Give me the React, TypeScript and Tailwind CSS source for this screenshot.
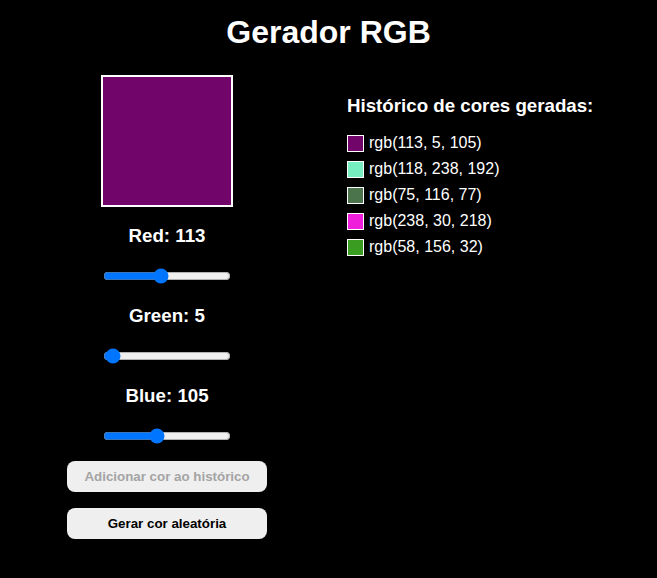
import { useState } from 'react'

type Rgb = [number, number, number]

const INITIAL_HISTORY: Rgb[] = [
  [113, 5, 105],
  [118, 238, 192],
  [75, 116, 77],
  [238, 30, 218],
  [58, 156, 32],
]

const toCss = (c: Rgb) => `rgb(${c[0]}, ${c[1]}, ${c[2]})`

export default function App() {
  const [rgb, setRgb] = useState<Rgb>([113, 5, 105])
  const [history, setHistory] = useState<Rgb[]>(INITIAL_HISTORY)

  const current = toCss(rgb)
  const alreadySaved = history.some((h) => toCss(h) === current)

  const setChannel = (i: number, v: number) => {
    const next = [...rgb] as Rgb
    next[i] = v
    setRgb(next)
  }

  const randomize = () => {
    const r = (): number => Math.floor(Math.random() * 256)
    setRgb([r(), r(), r()])
  }

  const channels = ['Red', 'Green', 'Blue']

  return (
    <div className="min-h-screen bg-black text-white font-['Liberation_Sans',Arial,sans-serif]">
      <h1 className="pt-[14px] text-center text-[32px] font-bold leading-[37px]">Gerador RGB</h1>

      <div className="mt-[24px] flex items-start">
        <div className="ml-[67px] flex w-[200px] flex-col items-center">
          <div className="h-[132px] w-[132px] border-2 border-white" style={{ backgroundColor: current }} />

          {channels.map((name, i) => (
            <div key={name} className="flex flex-col items-center">
              <div className={`${i === 0 ? 'mt-[18px]' : 'mt-[21px]'} h-[22px] text-[18.72px] font-bold leading-[22px]`}>
                {name}: {rgb[i]}
              </div>
              <div className="mt-[21px] flex h-[16px] items-center">
                <input
                  type="range"
                  min={0}
                  max={255}
                  value={rgb[i]}
                  onChange={(e) => setChannel(i, Number(e.target.value))}
                  className="m-0 w-[128px]"
                />
              </div>
            </div>
          ))}

          <button
            type="button"
            disabled={alreadySaved}
            onClick={() => setHistory([...history, rgb])}
            className="mt-[17px] h-[31px] w-[200px] rounded-[8px] bg-[#efefef] text-[13.33px] font-bold text-black disabled:text-[#a4a4a4]"
          >
            Adicionar cor ao histórico
          </button>
          <button
            type="button"
            onClick={randomize}
            className="mt-[16px] h-[31px] w-[200px] rounded-[8px] bg-[#efefef] text-[13.33px] font-bold text-black"
          >
            Gerar cor aleatória
          </button>
        </div>

        <div className="ml-[80px] mt-[20px]">
          <h2 className="h-[22px] text-[18.72px] font-bold leading-[22px]">Histórico de cores geradas:</h2>
          <ul className="mt-[13px]">
            {history.map((c, i) => (
              <li key={i} className="flex h-[26px] items-center">
                <span className="h-[17px] w-[17px] border border-white" style={{ backgroundColor: toCss(c) }} />
                <span className="ml-[5px] text-[16px] leading-[18px]">{toCss(c)}</span>
              </li>
            ))}
          </ul>
        </div>
      </div>
    </div>
  )
}
